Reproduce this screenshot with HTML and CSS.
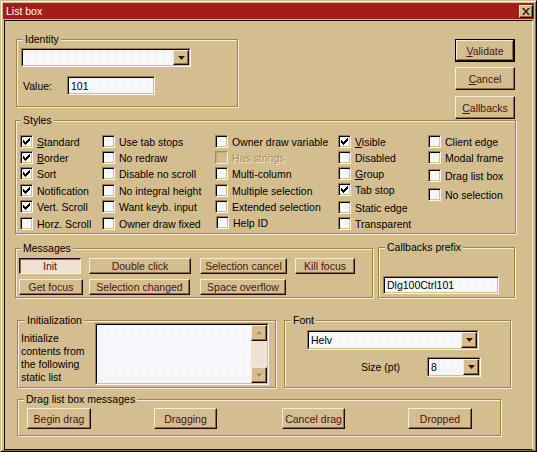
FILE: index.html
```html
<!DOCTYPE html>
<html>
<head>
<meta charset="utf-8">
<title>List box</title>
<link rel="stylesheet" href="styles.css">
</head>
<body>
<div class="window">
  <div class="titlebar">
    <span class="title">List box</span>
    <span class="close"><svg width="8" height="7" viewBox="0 0 8 7"><path d="M0 0h2l2 2.4L6 0h2L5 3.5 8 7H6L4 4.6 2 7H0l3-3.5z" fill="#3a1808"/></svg></span>
  </div>
  <div class="client">
    <div class="row row-a">
      <div class="group g-identity">
        <span class="legend">Identity</span>
        <div class="combo combo-identity">
          <div class="combo-in">
            <div class="combo-text"></div>
            <div class="combo-btn"><svg width="7" height="4" viewBox="0 0 7 4"><path d="M0 0h7L3.5 4z" fill="#4a1008"/></svg></div>
          </div>
        </div>
        <div class="value-row">
          <span class="value-label">Value:</span>
          <div class="field value-field">101</div>
        </div>
      </div>
      <div class="btn-col">
        <div class="btn btn-default btn-side"><span><u>V</u>alidate</span></div>
        <div class="btn btn-side btn-cancel"><span><u>C</u>ancel</span></div>
        <div class="btn btn-side btn-callbacks"><span><u>C</u>allbacks</span></div>
      </div>
    </div>

    <div class="row row-b">
      <div class="group g-styles">
        <span class="legend legend-5">Styles</span>
        <div class="styles-grid">
          <div class="col">
            <div class="cbrow"><span class="cb on"><svg width="7" height="7" viewBox="0 0 7 7"><path d="M0 2h1v3H0zM1 3h1v3H1zM2 4h1v3H2zM3 3h1v3H3zM4 2h1v3H4zM5 1h1v3H5zM6 0h1v3H6z"/></svg></span><span class="lbl"><u>S</u>tandard</span></div>
            <div class="cbrow"><span class="cb on"><svg width="7" height="7" viewBox="0 0 7 7"><path d="M0 2h1v3H0zM1 3h1v3H1zM2 4h1v3H2zM3 3h1v3H3zM4 2h1v3H4zM5 1h1v3H5zM6 0h1v3H6z"/></svg></span><span class="lbl"><u>B</u>order</span></div>
            <div class="cbrow"><span class="cb on"><svg width="7" height="7" viewBox="0 0 7 7"><path d="M0 2h1v3H0zM1 3h1v3H1zM2 4h1v3H2zM3 3h1v3H3zM4 2h1v3H4zM5 1h1v3H5zM6 0h1v3H6z"/></svg></span><span class="lbl">Sort</span></div>
            <div class="cbrow mt1"><span class="cb on"><svg width="7" height="7" viewBox="0 0 7 7"><path d="M0 2h1v3H0zM1 3h1v3H1zM2 4h1v3H2zM3 3h1v3H3zM4 2h1v3H4zM5 1h1v3H5zM6 0h1v3H6z"/></svg></span><span class="lbl">Notification</span></div>
            <div class="cbrow"><span class="cb on"><svg width="7" height="7" viewBox="0 0 7 7"><path d="M0 2h1v3H0zM1 3h1v3H1zM2 4h1v3H2zM3 3h1v3H3zM4 2h1v3H4zM5 1h1v3H5zM6 0h1v3H6z"/></svg></span><span class="lbl">Vert. Scroll</span></div>
            <div class="cbrow mt1"><span class="cb"></span><span class="lbl">Horz. Scroll</span></div>
          </div>
          <div class="col">
            <div class="cbrow"><span class="cb"></span><span class="lbl">Use tab stops</span></div>
            <div class="cbrow"><span class="cb"></span><span class="lbl">No redraw</span></div>
            <div class="cbrow"><span class="cb"></span><span class="lbl">Disable no scroll</span></div>
            <div class="cbrow mt1"><span class="cb"></span><span class="lbl">No integral height</span></div>
            <div class="cbrow"><span class="cb"></span><span class="lbl">Want keyb. input</span></div>
            <div class="cbrow mt1"><span class="cb"></span><span class="lbl">Owner draw fixed</span></div>
          </div>
          <div class="col">
            <div class="cbrow"><span class="cb"></span><span class="lbl">Owner draw variable</span></div>
            <div class="cbrow"><span class="cb disabled"></span><span class="lbl lbl-disabled">Has strings</span></div>
            <div class="cbrow"><span class="cb"></span><span class="lbl">Multi-column</span></div>
            <div class="cbrow mt1"><span class="cb"></span><span class="lbl">Multiple selection</span></div>
            <div class="cbrow"><span class="cb"></span><span class="lbl">Extended selection</span></div>
            <div class="cbrow helpid"><span class="cb"></span><span class="lbl">Help ID</span></div>
          </div>
          <div class="col">
            <div class="cbrow"><span class="cb on"><svg width="7" height="7" viewBox="0 0 7 7"><path d="M0 2h1v3H0zM1 3h1v3H1zM2 4h1v3H2zM3 3h1v3H3zM4 2h1v3H4zM5 1h1v3H5zM6 0h1v3H6z"/></svg></span><span class="lbl"><u>V</u>isible</span></div>
            <div class="cbrow"><span class="cb"></span><span class="lbl">Disabled</span></div>
            <div class="cbrow"><span class="cb"></span><span class="lbl"><u>G</u>roup</span></div>
            <div class="cbrow"><span class="cb on"><svg width="7" height="7" viewBox="0 0 7 7"><path d="M0 2h1v3H0zM1 3h1v3H1zM2 4h1v3H2zM3 3h1v3H3zM4 2h1v3H4zM5 1h1v3H5zM6 0h1v3H6z"/></svg></span><span class="lbl">Tab stop</span></div>
            <div class="cbrow mt2"><span class="cb"></span><span class="lbl">Static edge</span></div>
            <div class="cbrow"><span class="cb"></span><span class="lbl">Transparent</span></div>
          </div>
          <div class="col">
            <div class="cbrow"><span class="cb"></span><span class="lbl">Client edge</span></div>
            <div class="cbrow"><span class="cb"></span><span class="lbl">Modal frame</span></div>
            <div class="cbrow mt2"><span class="cb"></span><span class="lbl">Drag list box</span></div>
            <div class="cbrow mt3"><span class="cb"></span><span class="lbl">No selection</span></div>
          </div>
        </div>
      </div>
    </div>

    <div class="row row-c">
      <div class="group g-messages">
        <span class="legend legend-5">Messages</span>
        <div class="msg-grid">
          <div class="btn btn-sm btn-pressed w62">Init</div>
          <div class="btn btn-sm w102">Double click</div>
          <div class="btn btn-sm w87">Selection cancel</div>
          <div class="btn btn-sm w60">Kill focus</div>
          <div class="btn btn-sm w64">Get focus</div>
          <div class="btn btn-sm w101">Selection changed</div>
          <div class="btn btn-sm w86">Space overflow</div>
        </div>
      </div>
      <div class="group g-callbacks">
        <span class="legend">Callbacks prefix</span>
        <div class="field prefix-field">Dlg100Ctrl101</div>
      </div>
    </div>

    <div class="row row-d">
      <div class="group g-init">
        <span class="legend legend-7">Initialization</span>
        <div class="init-text">Initialize contents from the following static list</div>
        <div class="listbox">
          <div class="lb-in">
            <div class="lb-area"></div>
            <div class="scrollbar">
              <div class="sb-btn"><svg width="7" height="5" viewBox="0 0 7 5"><path d="M1 4h7L4.5 0.5z" fill="#f4ecd8"/><path d="M0 3.5h7L3.5 0z" fill="#a88c58"/></svg></div>
              <div class="sb-track"></div>
              <div class="sb-btn"><svg width="7" height="5" viewBox="0 0 7 5"><path d="M1 1h7L4.5 4.5z" fill="#f4ecd8"/><path d="M0 0.5h7L3.5 4z" fill="#a88c58"/></svg></div>
            </div>
          </div>
        </div>
      </div>
      <div class="group g-font">
        <span class="legend">Font</span>
        <div class="combo font-combo">
          <div class="combo-in">
            <div class="combo-text">Helv</div>
            <div class="combo-btn"><svg width="7" height="4" viewBox="0 0 7 4"><path d="M0 0h7L3.5 4z" fill="#4a1008"/></svg></div>
          </div>
        </div>
        <div class="size-row">
          <span class="size-label">Size (pt)</span>
          <div class="combo size-combo">
            <div class="combo-in">
              <div class="combo-text">8</div>
              <div class="combo-btn"><svg width="7" height="4" viewBox="0 0 7 4"><path d="M0 0h7L3.5 4z" fill="#4a1008"/></svg></div>
            </div>
          </div>
        </div>
      </div>
    </div>

    <div class="row row-e">
      <div class="group g-drag">
        <span class="legend">Drag list box messages</span>
        <div class="drag-grid">
          <div class="btn btn-drag w64">Begin drag</div>
          <div class="btn btn-drag w63">Dragging</div>
          <div class="btn btn-drag w63">Cancel drag</div>
          <div class="btn btn-drag w64">Dropped</div>
        </div>
      </div>
    </div>
  </div>
</div>
</body>
</html>
```

FILE: styles.css
```css
* { box-sizing: border-box; }
html, body { margin: 0; padding: 0; }
body {
  width: 537px;
  height: 452px;
  overflow: hidden;
  background: #d4be90;
  font-family: "Liberation Sans", Arial, sans-serif;
  font-size: 10.5px;
  color: #000;
}

.window {
  width: 537px;
  height: 452px;
  border: 1px solid;
  border-color: #d4be90 #000 #000 #d4be90;
  box-shadow: inset 1px 1px 0 #f8f0dc, inset -1px -1px 0 #8c6c38;
  padding: 2px 2px 1px 2px;
  display: flex;
  flex-direction: column;
  background: #d4be90;
}

.titlebar {
  height: 16px;
  flex-shrink: 0;
  background: #a51d1a;
  color: #fff;
  display: flex;
  align-items: center;
  padding-left: 3px;
}
.title { flex: 1; line-height: 16px; font-size: 10.5px; }
.close {
  width: 14px;
  height: 13px;
  margin-right: 1px;
  background: #d4be90;
  border: 1px solid;
  border-color: #f4ecd8 #1a0c04 #1a0c04 #f4ecd8;
  box-shadow: inset -1px -1px 0 #8c6c38;
  display: flex;
  align-items: center;
  justify-content: center;
}
.close svg { display: block; }

.client {
  margin: 1px 1px 0 1px;
  height: 430px;
  flex-shrink: 0;
  border: 1px solid;
  border-color: #1c1008 #f4ecd8 #1c1008 #1c1008;
  display: flex;
  flex-direction: column;
}

.row { display: flex; align-items: flex-start; flex-shrink: 0; }
.row-a { margin-top: 18px; }
.row-b { margin-top: 1px; }
.row-c { margin-top: 13px; }
.row-d { margin-top: 22px; }
.row-e { margin-top: 11px; }

/* group boxes */
.group {
  position: relative;
  flex-shrink: 0;
  border: 1px solid #a08448;
  box-shadow: inset 1px 1px 0 #f4ecd8, 1px 1px 0 #f4ecd8;
}
.legend {
  position: absolute;
  top: -7px;
  left: 6px;
  padding: 0 2px;
  line-height: 12px;
  background: #d4be90;
  white-space: nowrap;
}
.legend-5 { left: 5px; }
.legend-7 { left: 7px; }

.g-identity { margin-left: 11px; width: 222px; height: 68px; padding: 8px 0 0 4px; }
.g-styles { margin-left: 10px; width: 501px; height: 114px; padding: 13px 0 0 4px; }
.g-messages { margin-left: 10px; margin-top: 1px; width: 358px; height: 50px; padding: 9px 0 0 3px; }
.g-callbacks { margin-left: 5px; width: 137px; height: 51px; padding: 28px 0 0 4px; }
.g-init { margin-left: 12px; width: 259px; height: 68px; padding: 0 0 0 3px; display: flex; align-items: flex-start; }
.g-font { margin-left: 8px; width: 227px; height: 68px; }
.g-drag { margin-left: 12px; width: 484px; height: 37px; padding: 8px 0 0 9px; }

/* sunken fields */
.field {
  border: 1px solid;
  border-color: #9c7c48 #fcf6ec #fcf6ec #9c7c48;
  box-shadow: inset 1px 1px 0 #000, inset -1px -1px 0 #d4be90;
  background: repeating-conic-gradient(#ffffff 0 25%, #eef0f8 0 50%) 0 0 / 2px 2px;
  padding-left: 3px;
  display: flex;
  align-items: center;
  white-space: nowrap;
}
.value-row { display: flex; align-items: center; margin-top: 9px; }
.value-label { width: 44px; margin-left: 2px; }
.value-field { width: 88px; height: 19px; }
.prefix-field { width: 116px; height: 18px; }

/* combos */
.combo {
  border: 1px solid;
  border-color: #9c7c48 #fcf6ec #fcf6ec #9c7c48;
}
.combo-in {
  height: 100%;
  border: 1px solid;
  border-color: #000 #d4be90 #d4be90 #000;
  display: flex;
  background: repeating-conic-gradient(#ffffff 0 25%, #eef0f8 0 50%) 0 0 / 2px 2px;
}
.combo-text { flex: 1; padding-left: 2px; display: flex; align-items: center; }
.combo-btn {
  width: 16px;
  height: 100%;
  background: #d4be90;
  border: 1px solid;
  border-color: #f4ecd8 #1a0c04 #1a0c04 #f4ecd8;
  box-shadow: inset -1px -1px 0 #8c6c38;
  display: flex;
  align-items: center;
  justify-content: center;
}
.combo-btn svg { display: block; }
.combo-identity { width: 170px; height: 19px; }
.font-combo { width: 172px; height: 20px; margin: 9px 0 0 22px; }
.size-row { display: flex; align-items: center; margin: 7px 0 0 76px; }
.size-label { width: 66px; }
.size-combo { width: 54px; height: 20px; }

/* buttons */
.btn {
  background: #d4be90;
  color: #4a1410;
  border: 1px solid;
  border-color: #f4ecd8 #1a0c04 #1a0c04 #f4ecd8;
  box-shadow: inset -1px -1px 0 #8c6c38;
  display: flex;
  align-items: center;
  justify-content: center;
  white-space: nowrap;
  line-height: 12px;
}
.btn-col { display: flex; flex-direction: column; width: 60px; margin-left: auto; margin-right: 17px; }
.btn-side { height: 23px; width: 60px; }
.btn-cancel { margin-top: 5px; }
.btn-callbacks { margin-top: 6px; }
.btn-default {
  border-color: #000;
  box-shadow: inset -1px -1px 0 #1a0c04, inset 1px 1px 0 #f4ecd8, inset -2px -2px 0 #8c6c38;
}
.btn-sm { height: 16px; }
.btn-pressed {
  background: #efe0d2;
  border-color: #1a0c04 #f4ecd8 #f4ecd8 #1a0c04;
  box-shadow: inset 1px 1px 0 #8c6c38;
}
.btn-drag { height: 21px; }
.w60 { width: 60px; } .w62 { width: 62px; } .w63 { width: 63px; } .w64 { width: 64px; }
.w86 { width: 86px; } .w87 { width: 87px; } .w101 { width: 101px; } .w102 { width: 102px; }

.msg-grid {
  display: grid;
  grid-template-columns: 70px 111px 95px 60px;
  grid-template-rows: 16px 16px;
  row-gap: 5px;
}
.drag-grid {
  display: grid;
  grid-template-columns: 127px 128px 126px 64px;
}

/* checkboxes */
.styles-grid {
  display: grid;
  grid-template-columns: 82px 113px 123px 90px 80px;
}
.col { display: flex; flex-direction: column; }
.cbrow { height: 16px; display: flex; align-items: flex-start; white-space: nowrap; }
.cbrow.mt1 { margin-top: 1px; }
.cbrow.mt2 { margin-top: 2px; }
.cbrow.mt3 { margin-top: 3px; }
.cbrow.helpid { margin-top: 0; padding-left: 1px; }
.cb {
  width: 13px;
  height: 13px;
  margin-top: 1px;
  margin-right: 4px;
  flex-shrink: 0;
  border: 1px solid;
  border-color: #9c7c48 #fcf6ec #fcf6ec #9c7c48;
  box-shadow: inset 1px 1px 0 #000, inset -1px -1px 0 #d4be90;
  background: repeating-conic-gradient(#ffffff 0 25%, #eef0f8 0 50%) 0 0 / 2px 2px;
  padding: 2px 0 0 2px;
}
.cb svg { display: block; fill: #000; }
.cb.disabled {
  background: #d4be90;
  border-color: #a88c58 #f4ecd8 #f4ecd8 #a88c58;
  box-shadow: inset 1px 1px 0 #c4ac78;
}
.lbl { line-height: 16px; }
.lbl u { text-underline-offset: 1px; }
.lbl-disabled { color: #a8905c; text-shadow: 1px 1px 0 #f4ecd8; }

/* initialization */
.init-text { width: 74px; margin-top: 11px; line-height: 13px; }
.listbox {
  width: 174px;
  height: 62px;
  margin-top: 2px;
  border: 1px solid;
  border-color: #9c7c48 #fcf6ec #fcf6ec #9c7c48;
}
.lb-in {
  height: 100%;
  border: 1px solid;
  border-color: #000 #d4be90 #d4be90 #000;
  display: flex;
}
.lb-area { flex: 1; background: repeating-conic-gradient(#ffffff 0 25%, #eef0f8 0 50%) 0 0 / 2px 2px; }
.scrollbar { width: 16px; display: flex; flex-direction: column; }
.sb-btn {
  height: 16px;
  background: #d4be90;
  border: 1px solid;
  border-color: #f4ecd8 #1a0c04 #1a0c04 #f4ecd8;
  box-shadow: inset -1px -1px 0 #8c6c38;
  display: flex;
  align-items: center;
  justify-content: center;
}
.sb-btn svg { display: block; }
.sb-track { flex: 1; background: repeating-conic-gradient(#f6ece2 0 25%, #e8d8c6 0 50%) 0 0 / 2px 2px; }
```
